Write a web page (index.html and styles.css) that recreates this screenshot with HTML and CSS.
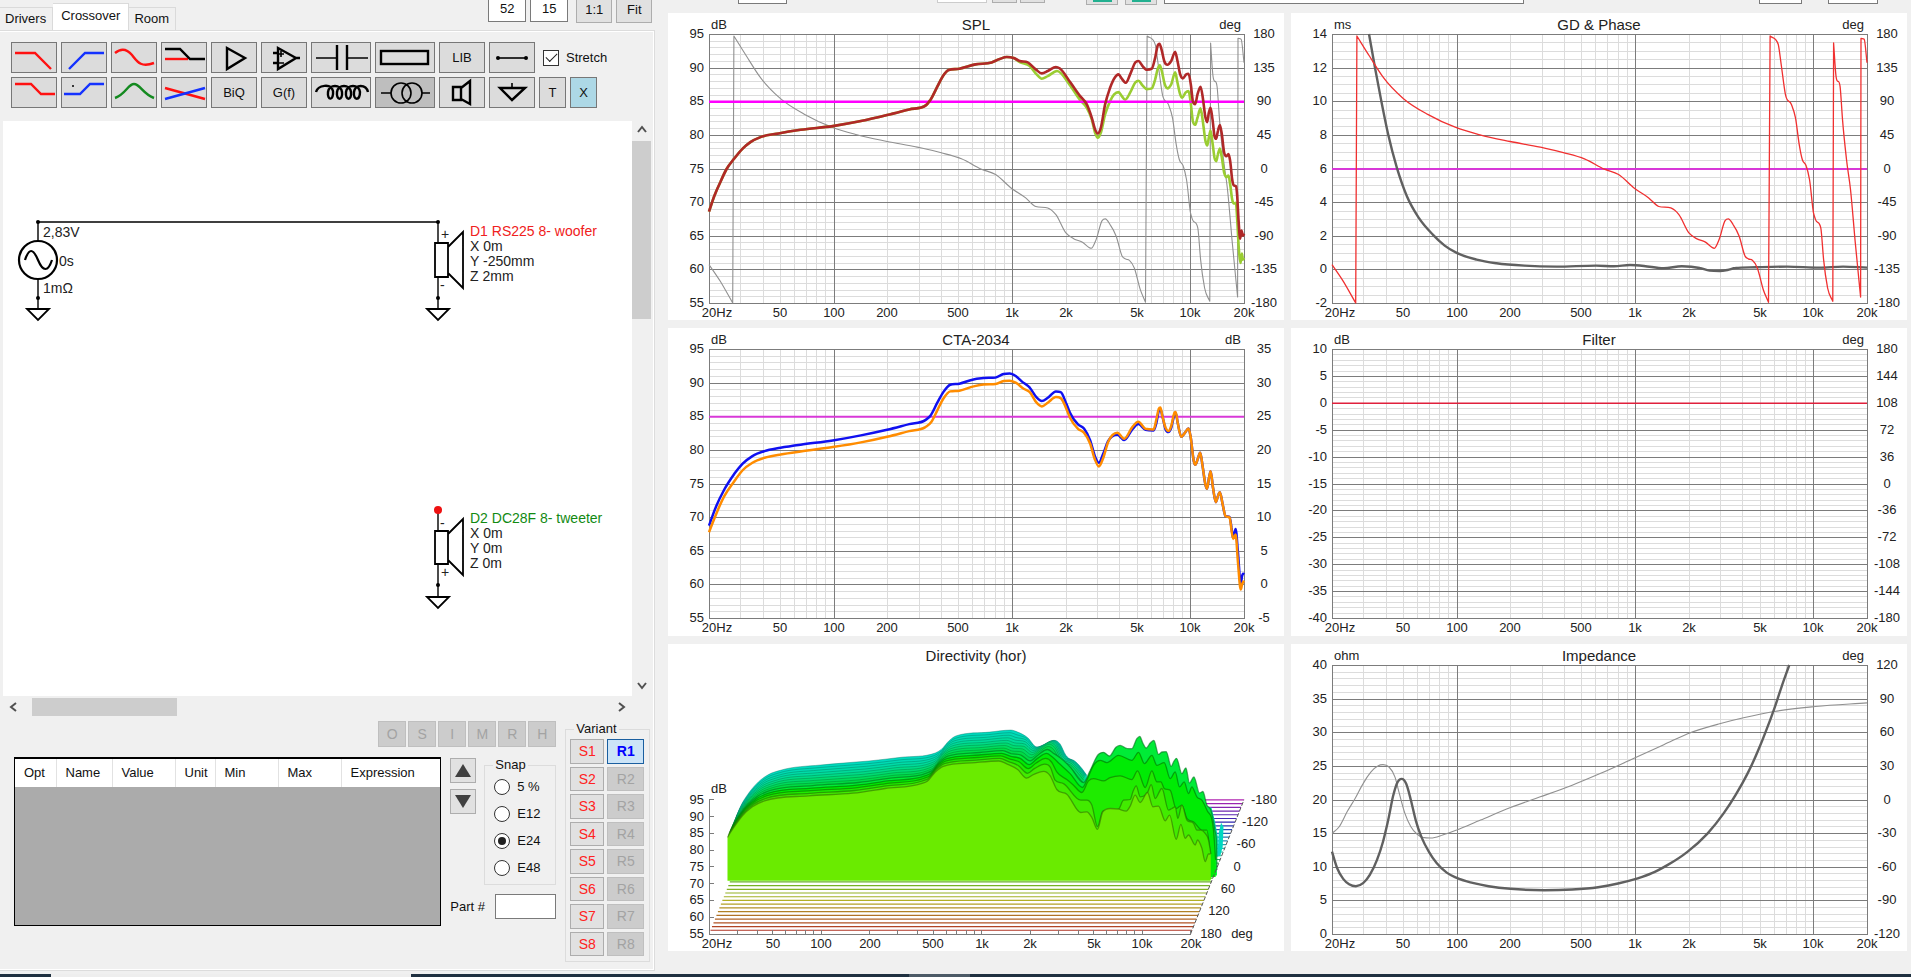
FILE: index.html
```html
<!DOCTYPE html>
<html lang="en">
<head>
<meta charset="utf-8">
<title>Crossover</title>
<link rel="stylesheet" href="styles.css">
</head>
<body>
<main class="workspace">
  <section class="editor">
    <header class="editor-head">
      <nav class="tabs">
        <button class="tab">Drivers</button>
        <button class="tab tab-active">Crossover</button>
        <button class="tab">Room</button>
      </nav>
      <div class="grid-size">
        <input class="size-box" type="text" value="52" aria-label="Columns">
        <input class="size-box" type="text" value="15" aria-label="Rows">
        <button class="size-button">1:1</button>
        <button class="size-button">Fit</button>
      </div>
    </header>

    <div class="tab-page">
      <div class="toolbar">
        <div class="tool-row">
          <button class="tool" aria-label="Low pass"><svg class="icon"><path class="red" d="M4 11H24L40 27"/></svg></button>
          <button class="tool" aria-label="High pass"><svg class="icon"><path class="blue" d="M8 27L24 11H43"/></svg></button>
          <button class="tool" aria-label="Notch"><svg class="icon"><path class="red" d="M4 11C10 6 16 7 21 13S29 26 43 21"/></svg></button>
          <button class="tool" aria-label="Shelf"><svg class="icon"><path class="red" d="M4 17H27"/><path class="ink" d="M4 7H19L29 17H44"/></svg></button>
          <button class="tool" aria-label="Buffer"><svg class="icon"><path class="ink" d="M16 6L34 16L16 27Z"/></svg></button>
          <button class="tool" aria-label="Op amp"><svg class="icon"><path class="ink" d="M17 6L35 16L17 27ZM12 11H17M12 21H17M35 16H39"/><path class="thin" d="M18 12H23M20 9V15M18 21H23"/></svg></button>
          <button class="tool tool-wide" aria-label="Capacitor"><svg class="icon icon-wide"><path class="thin" d="M5 16H26M36 16H57"/><path class="ink" d="M26 3V28M36 3V28"/></svg></button>
          <button class="tool tool-wide" aria-label="Resistor"><svg class="icon icon-wide"><rect class="ink" x="6" y="9" width="47" height="13"/></svg></button>
          <button class="tool">LIB</button>
          <button class="tool" aria-label="Wire"><svg class="icon"><path class="thin" d="M9 16H37"/><circle cx="9" cy="16" r="2"/><circle cx="37" cy="16" r="2"/></svg></button>
          <label class="stretch"><input class="tick" type="checkbox" checked>Stretch</label>
        </div>
        <div class="tool-row">
          <button class="tool" aria-label="Low shelf"><svg class="icon"><path class="red" d="M4 7H20L30 17H44"/></svg></button>
          <button class="tool" aria-label="High shelf"><svg class="icon"><path class="blue" d="M3 17H19L29 7H43"/><circle cx="12" cy="9" r="1"/></svg></button>
          <button class="tool" aria-label="Peak"><svg class="icon"><path class="green" d="M4 21C15 17 17 7 23 7S32 17 43 21"/></svg></button>
          <button class="tool" aria-label="Cross"><svg class="icon"><path class="red" d="M4 11L44 22"/><path class="blue" d="M4 22L44 11"/></svg></button>
          <button class="tool">BiQ</button>
          <button class="tool">G(f)</button>
          <button class="tool tool-wide" aria-label="Coil"><svg class="icon icon-wide"><path class="ink" d="M5 15C7 8 20 6 22 14C23 24 16 24 17 15C18 7 30 7 31 15C32 24 25 24 26 15C27 7 39 7 40 15C41 24 34 24 35 15C36 7 48 7 49 15C49 24 42 24 43 15C44 7 55 7 57 15"/></svg></button>
          <button class="tool tool-wide tool-down" aria-label="Transformer"><svg class="icon icon-wide"><path class="thin" d="M6 16H16M47 16H55"/><circle class="ring" cx="26" cy="16" r="10"/><circle class="ring" cx="37" cy="16" r="10"/></svg></button>
          <button class="tool" aria-label="Driver"><svg class="icon"><path class="ink" d="M14 10H22V23H14ZM22 11L31 4V27L22 22"/></svg></button>
          <button class="tool" aria-label="Ground"><svg class="icon"><path class="ink" d="M11 11H36L23 23Z"/><path class="thin" d="M23 6V11"/></svg></button>
          <button class="tool tool-small">T</button>
          <button class="tool tool-small tool-lit">X</button>
        </div>
      </div>

      <div class="sheet-frame">
        <div class="sheet">
          <svg class="schematic">
            <g transform="translate(-3 -121)">
              <path class="wire" d="M38 241V222H438V243M38 279V309M438 277V309M438 510V531M438 564V597"/>
              <circle class="source" cx="38" cy="260" r="19"/>
              <path class="source" d="M25 260C29 248 33 248 38 260S48 272 52 260"/>
              <path class="part" d="M435 243H448V277H435ZM448 247L463 232V288L448 273"/>
              <path class="part" d="M435 531H448V564H435ZM448 534L463 519V575L448 560"/>
              <path class="part" d="M27 309H49L38 320ZM427 309H449L438 320ZM427 597H449L438 608Z"/>
              <circle cx="38" cy="222" r="2"/><circle cx="38" cy="298" r="2"/>
              <circle cx="438" cy="222" r="2"/><circle cx="438" cy="298" r="2"/><circle cx="438" cy="585" r="2"/>
              <circle class="open-end" cx="438" cy="510" r="4"/>
              <text x="43" y="237">2,83V</text>
              <text x="59" y="266">0s</text>
              <text x="43" y="293">1mΩ</text>
              <text x="441" y="239">+</text><text x="440" y="290">-</text>
              <text x="440" y="528">-</text><text x="441" y="577">+</text>
              <text class="woofer" x="470" y="236">D1 RS225 8- woofer</text>
              <text x="470" y="251">X 0m</text><text x="470" y="266">Y -250mm</text><text x="470" y="281">Z 2mm</text>
              <text class="tweeter" x="470" y="523">D2 DC28F 8- tweeter</text>
              <text x="470" y="538">X 0m</text><text x="470" y="553">Y 0m</text><text x="470" y="568">Z 0m</text>
            </g>
          </svg>
        </div>
        <div class="scroll-v">
          <svg class="arrow"><path d="M6 11L10 6L14 11"/></svg>
          <div class="thumb-v"></div>
          <svg class="arrow"><path d="M6 7L10 12L14 7"/></svg>
        </div>
        <div class="scroll-h">
          <svg class="arrow"><path d="M13 6L8 10L13 14"/></svg>
          <div class="thumb-h"></div>
          <svg class="arrow"><path d="M7 6L12 10L7 14"/></svg>
        </div>
      </div>

      <div class="bottom">
        <div class="parts">
          <div class="modes">
            <button class="mode" disabled>O</button><button class="mode" disabled>S</button><button class="mode" disabled>I</button><button class="mode" disabled>M</button><button class="mode" disabled>R</button><button class="mode" disabled>H</button>
          </div>
          <div class="parts-body">
            <div class="param-box">
              <table class="params">
                <thead><tr><th class="c-opt">Opt</th><th class="c-name">Name</th><th class="c-value">Value</th><th class="c-unit">Unit</th><th class="c-value">Min</th><th class="c-value">Max</th><th>Expression</th></tr></thead>
              </table>
            </div>
            <div class="snap-column">
              <div class="snap-row">
                <div class="movers">
                  <button class="mover" aria-label="Up"><svg class="mover-icon"><path d="M0 13L8 0L16 13Z"/></svg></button>
                  <button class="mover" aria-label="Down"><svg class="mover-icon"><path d="M0 0H16L8 13Z"/></svg></button>
                </div>
                <fieldset class="group snap">
                  <legend>Snap</legend>
                  <label class="choice"><input class="dot" type="radio" name="snap">5 %</label>
                  <label class="choice"><input class="dot" type="radio" name="snap">E12</label>
                  <label class="choice"><input class="dot" type="radio" name="snap" checked>E24</label>
                  <label class="choice"><input class="dot" type="radio" name="snap">E48</label>
                </fieldset>
              </div>
              <label class="part-number">Part #<input class="part-input" type="text"></label>
            </div>
          </div>
        </div>
        <fieldset class="group variant">
          <legend>Variant</legend>
          <div class="variant-grid">
            <button class="save">S1</button><button class="recall recall-on">R1</button>
            <button class="save">S2</button><button class="recall" disabled>R2</button>
            <button class="save">S3</button><button class="recall" disabled>R3</button>
            <button class="save">S4</button><button class="recall" disabled>R4</button>
            <button class="save">S5</button><button class="recall" disabled>R5</button>
            <button class="save">S6</button><button class="recall" disabled>R6</button>
            <button class="save">S7</button><button class="recall" disabled>R7</button>
            <button class="save">S8</button><button class="recall" disabled>R8</button>
          </div>
        </fieldset>
      </div>
    </div>
  </section>

  <section class="results">
    <div class="strip">
      <span class="stub stub-a"></span><span class="stub stub-b"></span><span class="stub stub-c"></span><span class="stub stub-c stub-near"></span>
      <span class="stub stub-d"></span><span class="stub stub-d stub-next"></span><span class="stub stub-e"></span><span class="stub stub-f"></span><span class="stub stub-g"></span>
    </div>
    <div class="charts">
      <svg class="chart" id="spl"></svg>
      <svg class="chart" id="gd"></svg>
      <svg class="chart" id="cta"></svg>
      <svg class="chart" id="filter"></svg>
      <svg class="chart" id="directivity"></svg>
      <svg class="chart" id="impedance"></svg>
    </div>
  </section>
</main>
<footer class="taskbar"><span class="task-light"></span><span class="task-grey"></span></footer>
<script src="charts.js"></script>
</body>
</html>
```
FILE: styles.css
```css
* { box-sizing: border-box; }
body {
  margin: 0;
  height: 100vh;
  display: flex;
  flex-direction: column;
  background: #f0f0f0;
  color: #111;
  font: 13px/16px "Liberation Sans", Arial, sans-serif;
  overflow: hidden;
}
button, input { font: inherit; color: inherit; margin: 0; padding: 0; border-radius: 0; }
svg { display: block; }
.workspace { flex: 1; min-height: 0; display: grid; grid-template-columns: 34.5% 1fr; }

.editor { display: flex; flex-direction: column; min-width: 0; padding: 0 4px 3px 0; }
.editor-head { display: flex; justify-content: space-between; height: 30px; padding-right: 3px; }
.tabs { display: flex; align-items: flex-end; }
.tab { height: 23px; padding: 0 6px 0 5px; border: 1px solid #dadada; border-bottom: 0; border-left: 0; background: #f0f0f0; }
.tab-active { height: 27px; padding: 0 8px 3px; background: #fff; }
.grid-size { display: flex; align-items: flex-start; }
.size-box, .size-button { text-align: center; border: 1px solid #7a7a7a; border-top: 0; }
.size-box { width: 38px; height: 22px; margin-right: 4px; padding-bottom: 4px; background: #fff; }
.size-button { width: 36px; height: 23px; margin-left: 4px; padding-bottom: 3px; background: #e1e1e1; border-color: #adadad; }

.tab-page { flex: 1; min-height: 0; display: flex; flex-direction: column; border: 1px solid #dcdcdc; border-left: 0; box-shadow: inset -1px 1px #fff, inset 0 -1px #fff; }
.toolbar { display: flex; flex-direction: column; gap: 4px; padding: 11px 0 13px 11px; }
.tool-row { display: flex; gap: 4px; align-items: center; }
.tool { width: 46px; height: 31px; flex: none; border: 1px solid #777; background: #dcdcdc; overflow: hidden; }
.tool-wide { width: 60px; }
.tool-small { width: 27px; }
.tool-down { background: #bebebe; }
.tool-lit { background: #add8e6; }
.icon { width: 46px; height: 31px; margin: -1px; }
.icon-wide { width: 60px; }
.icon path, .icon rect { fill: none; stroke-width: 2.4; }
.icon .ink { stroke: #000; }
.icon .thin { stroke: #000; stroke-width: 1.6; }
.icon .red { stroke: #f11; }
.icon .blue { stroke: #1432ff; }
.icon .green { stroke: #148a20; }
.ring { fill: none; stroke: #000; stroke-width: 1.6; }
.stretch { display: flex; align-items: center; gap: 7px; margin-left: 4px; }
.tick { appearance: none; width: 16px; height: 16px; border: 1px solid #333; background: #fff; display: grid; place-items: center; }
.tick:checked::before { content: ""; width: 10px; height: 5px; border: solid #222; border-width: 0 0 1px 1px; transform: translateY(-2px) rotate(-45deg); }

.sheet-frame { flex: 1; min-height: 0; display: grid; grid-template: 1fr 21px / 1fr 20px; margin: 0 2px 0 3px; }
.sheet { background: #fff; min-height: 0; overflow: hidden; }
.schematic { width: 100%; height: 100%; font-size: 14px; }
.schematic text { fill: #222; }
.schematic .woofer { fill: #f02020; }
.schematic .tweeter { fill: #128a12; }
.wire { fill: none; stroke: #000; stroke-width: 1.4; }
.part { fill: none; stroke: #000; stroke-width: 1.8; }
.source { fill: none; stroke: #000; stroke-width: 2.2; }
.open-end { fill: #e11; }
.scroll-v { display: flex; flex-direction: column; }
.scroll-v .arrow:last-child { margin-top: auto; }
.thumb-v { width: 19px; height: 31%; background: #cdcdcd; }
.scroll-h { display: flex; align-items: center; }
.scroll-h .arrow:last-child { margin-left: auto; }
.thumb-h { width: 23%; height: 18px; margin-left: 9px; background: #cdcdcd; }
.arrow { width: 20px; height: 20px; }
.arrow path { fill: none; stroke: #505050; stroke-width: 2; }

.bottom { display: flex; gap: 9px; padding: 4px 4px 8px 14px; }
.parts { flex: 1; min-width: 0; display: flex; flex-direction: column; gap: 10px; }
.modes { display: flex; justify-content: flex-end; gap: 2px; }
.mode { width: 28px; height: 26px; border: 1px solid #bfbfbf; background: #ccc; color: #a3a3a3; }
.parts-body { display: flex; gap: 9px; }
.param-box { flex: 1; min-width: 0; height: 169px; border: 1px solid #000; border-top-width: 2px; background: #ababab; }
.params { width: 100%; border-collapse: collapse; table-layout: fixed; background: #fff; }
.params th { height: 28px; padding: 0 0 0 9px; text-align: left; font-weight: normal; border-right: 1px solid #e2e2e2; }
.params th:last-child { border-right: 0; }
.params .c-opt { width: 41px; }
.params .c-name { width: 56px; }
.params .c-value { width: 63px; }
.params .c-unit { width: 40px; }
.snap-column { width: 106px; display: flex; flex-direction: column; gap: 9px; }
.snap-row { display: flex; gap: 8px; }
.movers { display: flex; flex-direction: column; gap: 6px; padding-top: 1px; }
.mover { width: 26px; height: 25px; border: 1px solid #adadad; background: #e1e1e1; display: grid; place-items: center; }
.mover-icon { width: 16px; height: 13px; fill: #404040; }
.group { margin: 0; border: 1px solid #dcdcdc; min-width: 0; }
.group legend { padding: 0 2px; margin: 0; }
.snap { flex: 1; padding: 6px 0 8px 9px; display: flex; flex-direction: column; gap: 11px; }
.snap legend { margin-left: -1px; }
.choice { display: flex; align-items: center; gap: 7px; }
.dot { appearance: none; width: 16px; height: 16px; border: 1px solid #333; border-radius: 50%; background: #fff; display: grid; place-items: center; }
.dot:checked::before { content: ""; width: 8px; height: 8px; border-radius: 50%; background: #222; }
.part-number { display: flex; justify-content: space-between; align-items: center; }
.part-input { width: 61px; height: 25px; border: 1px solid #7a7a7a; background: #fff; }
.variant { width: 85px; padding: 2px 5px 5px 4px; }
.variant legend { margin-left: 4px; }
.variant-grid { display: grid; grid-template-columns: 34px 37px; grid-auto-rows: 1fr; gap: 3px; height: 217px; }
.save, .recall { border: 1px solid #adadad; background: #e1e1e1; }
.save { color: #f22; }
.recall { background: #ccc; border-color: #bfbfbf; color: #a3a3a3; }
.recall-on { background: #cce4f7; border-color: #1a5fa0; color: #00f; font-weight: bold; }
.save, .recall, .mode { font-size: 14px; }

.results { display: flex; flex-direction: column; min-width: 0; padding: 0 4px 23px 9px; }
.strip { height: 13px; display: flex; align-items: flex-start; }
.stub { flex: none; border: 1px solid #7a7a7a; border-top: 0; background: #fff; height: 4px; }
.stub-a { width: 49px; margin-left: 70px; }
.stub-b { width: 50px; height: 3px; margin-left: 150px; border-color: #ccc; }
.stub-c { width: 25px; height: 3px; margin-left: 5px; background: #e1e1e1; border-color: #adadad; }
.stub-near { margin-left: 3px; }
.stub-d { width: 32px; height: 5px; margin-left: 41px; border-color: #adadad; background: linear-gradient(#22b090, #22b090) center top / 19px 2px no-repeat #e1e1e1; }
.stub-next { margin-left: 7px; }
.stub-e { flex: 1; margin-left: 7px; }
.stub-f { width: 43px; margin-left: 235px; }
.stub-g { width: 50px; margin: 0 29px 0 26px; }
.charts { flex: 1; min-height: 0; display: grid; grid-template-columns: 1fr 1fr; grid-template-rows: repeat(3, minmax(0, 1fr)); gap: 8px 7px; }
.chart { width: 100%; height: 100%; background: #fff; fill: #222; }
.chart .title { font-size: 15px; text-anchor: middle; }
.chart .mid { text-anchor: middle; }
.chart .end { text-anchor: end; }
.minor, .major { shape-rendering: crispEdges; fill: none; stroke: #dcdcdc; }
.major { stroke: #7c7c7c; }
.curve { fill: none; stroke-linejoin: round; }

.taskbar { height: 3px; display: flex; background: #1f3040; }
.task-light { width: 360px; margin-left: 51px; background: #eee; }
.task-grey { width: 61px; margin-left: 498px; background: #4c5a66; }
```
FILE: charts.js
```js
const FREQ = [['20Hz', 20], ['50', 50], ['100', 100], ['200', 200], ['500', 500], ['1k', 1000], ['2k', 2000], ['5k', 5000], ['10k', 10000], ['20k', 20000]];
const logPos = f => Math.log10(f / 20) / 3;
const shift = (pts, ax, bx, by) => pts.map(([x, y]) => [ax + bx * x, by + y]);

/* Each curve is a list of [x, y] samples in the coordinate box of its chart. */
const redTop = shift([[0,118],[30,158],[60,200],[80,225],[95,265],[105,300],[113,312],[122,295],[135,225],[150,175],[162,148],[175,135],[185,148],[197,160],[210,135],[225,100],[235,95],[247,110],[260,121],[275,118],[285,85],[293,48],[298,43],[304,60],[312,95],[322,106],[333,95],[345,67],[352,95],[360,135],[368,147],[378,135],[385,133],[392,165],[398,215],[405,224],[412,195],[421,172],[428,205],[436,265],[441,278],[446,250],[451,235],[457,270],[463,320],[468,328],[473,305],[479,287],[485,315],[492,370],[498,380],[505,374],[510,395],[516,450],[521,468],[527,470],[531,500],[535,570],[540,627],[544,603],[548,618],[552,612]], 995.5, .8297, 90);
const greenTop = shift([[0,122],[30,168],[60,212],[80,235],[95,270],[105,310],[113,325],[122,310],[135,255],[150,215],[162,195],[175,188],[185,200],[195,211],[210,190],[225,160],[235,154],[247,168],[260,179],[275,177],[285,150],[293,118],[299,108],[306,130],[314,165],[322,177],[333,165],[345,129],[352,160],[360,195],[366,205],[376,190],[385,185],[391,215],[398,275],[405,286],[412,265],[421,237],[428,275],[436,335],[441,348],[446,325],[451,303],[457,340],[463,385],[468,395],[473,375],[479,357],[485,385],[492,430],[498,443],[505,438],[510,465],[516,510],[521,522],[527,520],[531,570],[536,660],[541,700],[545,672],[548,690],[552,685]], 995.5, .8297, 90);
const splLow = [[122,636],[135,590],[150,548],[165,510],[185,477],[205,448],[225,428],[250,413],[295,402],[350,391],[430,380],[500,365],[565,347],[620,330],[662,317],[672,303],[690,262],[705,228],[718,212],[745,208],[785,195],[825,189],[845,179],[863,173],[880,176]];
const splRed = [...splLow,[895,185],[915,189],[935,210],[950,222],[965,215],[985,203],...redTop];
const splGreen = [...splLow,[895,188],[920,200],[937,225],[950,238],[965,230],[988,215],...greenTop.slice(1)];
const phase = [
  [[122,795],[150,845],[181,910]],
  [[184,110],[215,170],[250,235],[300,298],[360,345],[430,384],[490,406],[565,426],[640,443],[700,460],[750,478],[800,509],[835,525],[875,567],[910,595],[935,621],[965,625],[985,645],[1010,700],[1030,718],[1050,727],[1073,746],[1085,720],[1100,663],[1108,658],[1120,675],[1135,710],[1150,770],[1158,778],[1168,782],[1180,805],[1195,870],[1208,908]],
  [[1212,110],[1232,135],[1240,200],[1250,285],[1265,315],[1275,355],[1285,440],[1292,480],[1302,500],[1310,540],[1320,640],[1325,660],[1338,685],[1345,780],[1355,865],[1368,905]],
  [[1370,131],[1376,230],[1386,262],[1392,360],[1402,480],[1412,570],[1424,730],[1437,892]],
  [[1438,117],[1446,120],[1453,190]]];
const phaseGd = phase.map(s => s.map(([x, y]) => [117 + (x - 122) * 1343 / 1331, y]));
const delay = [[210,104],[225,205],[240,300],[258,405],[280,505],[305,590],[335,655],[370,705],[400,738],[430,760],[480,780],[530,791],[600,798],[680,801],[780,798],[825,800],[865,796],[900,799],[950,806],[995,800],[1040,805],[1065,813],[1090,814],[1110,811],[1130,805],[1180,803],[1260,801],[1340,804],[1400,801],[1460,804]];
const tail = [[1288,310],[1297,352],[1305,342],[1315,327],[1320,350],[1328,425],[1332,436],[1338,418],[1344,400],[1350,440],[1357,495],[1361,508],[1366,475],[1370,455],[1376,505],[1383,548],[1388,530],[1393,518],[1400,555],[1407,590]];
const ctaBlue = [[122,618],[140,560],[160,510],[185,463],[205,433],[230,410],[260,395],[300,385],[350,376],[430,363],[500,348],[565,331],[620,314],[660,302],[672,290],[690,250],[705,218],[722,196],[745,193],[780,180],[805,176],[835,174],[855,164],[870,162],[885,170],[900,186],[920,205],[937,234],[950,245],[965,235],[985,216],[997,218],[1010,250],[1020,280],[1040,315],[1055,327],[1070,362],[1082,410],[1092,430],[1102,405],[1115,365],[1138,346],[1155,362],[1175,330],[1190,314],[1208,331],[1228,333],[1235,310],[1241,275],[1245,270],[1250,290],[1258,330],[1265,338],[1272,325],[1280,285],[1283,280],...tail,[1417,592],[1422,625],[1426,655],[1432,628],[1438,700],[1445,795],[1448,770],[1453,760]];
const ctaOrange = [[122,638],[140,583],[160,530],[185,485],[205,453],[230,430],[260,415],[300,405],[350,396],[430,383],[500,369],[565,352],[620,335],[660,323],[675,308],[690,273],[705,238],[722,216],[745,214],[780,201],[805,195],[835,194],[855,185],[870,184],[885,190],[905,208],[920,218],[937,250],[950,261],[965,250],[985,233],[997,236],[1010,265],[1020,295],[1040,328],[1055,340],[1070,372],[1082,420],[1092,441],[1102,418],[1115,368],[1138,340],[1155,358],[1175,323],[1190,307],[1208,328],[1228,330],[1235,300],[1241,268],[1245,264],[1250,290],[1258,325],[1265,335],[1272,320],[1280,280],[1283,278],...tail,[1417,594],[1426,658],[1432,645],[1438,730],[1445,810],[1448,795],[1453,783]];
const impedance = [[117,635],[130,685],[145,717],[160,733],[177,739],[195,730],[212,705],[230,660],[245,605],[258,540],[270,470],[280,430],[292,416],[303,430],[315,480],[327,540],[342,592],[360,635],[380,670],[405,698],[430,714],[470,729],[510,739],[565,747],[650,751],[720,749],[785,742],[835,731],[880,717],[920,700],[960,675],[1010,635],[1060,580],[1100,520],[1130,465],[1160,400],[1187,330],[1207,270],[1227,205],[1245,140],[1265,73]];
const impPhase = [[117,580],[135,560],[155,515],[175,475],[195,430],[215,395],[232,377],[245,373],[260,380],[275,410],[285,455],[300,520],[315,560],[330,582],[345,592],[365,594],[395,585],[430,570],[490,540],[565,502],[640,470],[720,435],[790,400],[875,354],[950,313],[1010,280],[1090,250],[1150,232],[1227,213],[1330,198],[1460,187]];

/* Cubic through the samples; slopes are limited so that peaks are not overshot. */
function smooth(p) {
  const n = p.length, d = [], m = [];
  for (let i = 0; i < n - 1; i++) d[i] = (p[i + 1][1] - p[i][1]) / (p[i + 1][0] - p[i][0]);
  for (let i = 0; i < n; i++) {
    if (i === 0) m[i] = d[0];
    else if (i === n - 1) m[i] = d[n - 2];
    else if (d[i - 1] * d[i] <= 0) m[i] = 0;
    else {
      const a = p[i][0] - p[i - 1][0], b = p[i + 1][0] - p[i][0];
      const mean = (d[i - 1] * b + d[i] * a) / (a + b);
      m[i] = Math.sign(mean) * Math.min(Math.abs(mean), 3 * Math.abs(d[i - 1]), 3 * Math.abs(d[i]));
    }
  }
  let s = p[0].map(v => v.toFixed(1)).join(' ');
  for (let i = 0; i < n - 1; i++) {
    const h = (p[i + 1][0] - p[i][0]) / 3;
    s += 'C' + [p[i][0] + h, p[i][1] + m[i] * h, p[i + 1][0] - h, p[i + 1][1] - m[i + 1] * h, p[i + 1][0], p[i + 1][1]].map(v => v.toFixed(1)).join(' ');
  }
  return s;
}

const text = (x, y, s, c = 'mid') => `<text x="${Math.round(x)}" y="${Math.round(y)}" class="${c}">${s}</text>`;

function frame(el, box) {
  const w = el.clientWidth, h = el.clientHeight;
  const L = 41, R = w - 40, T = 21, B = h - 17;
  const X = x => L + (x - box[0]) / (box[2] - box[0]) * (R - L);
  const Y = y => T + (y - box[1]) / (box[3] - box[1]) * (B - T);
  return { w, h, L, R, T, B, X, Y, map: pts => pts.map(([x, y]) => [X(x), Y(y)]) };
}

function drawChart(id, o) {
  const el = document.getElementById(id);
  const { w, L, R, T, B, map } = frame(el, o.box);
  let minor = '', major = '', labels = '';
  for (const decade of [10, 100, 1000, 10000])
    for (let k = 1; k < 10; k++) {
      const f = decade * k;
      if (f < 30 || f > 19000) continue;
      const seg = `M${Math.round(L + logPos(f) * (R - L)) + .5} ${T}V${B}`;
      if (k === 1) major += seg; else minor += seg;
    }
  const n = o.left.length - 1, total = n * o.sub;
  for (let i = 0; i <= total; i++) {
    const seg = `M${L} ${Math.round(T + i / total * (B - T)) + .5}H${R}`;
    if (i % o.sub) minor += seg; else major += seg;
  }
  major += `M${L + .5} ${T}V${B}M${R + .5} ${T}V${B + 1}`;
  o.left.forEach((t, i) => labels += text(L - 5, T + i / n * (B - T) + 4, t, 'end'));
  o.right.forEach((t, i) => labels += text(R + 20, T + i / (o.right.length - 1) * (B - T) + 4, t));
  FREQ.forEach(([t, f], i) => labels += text(L + logPos(f) * (R - L) + (i ? 0 : 8), B + 14, t));
  labels += text(L + 2, T - 5, o.units[0], 'start') + text(R - 3, T - 5, o.units[1], 'end') + text(w / 2, T - 4, o.title, 'title');
  let curves = '';
  for (const c of o.curves) {
    const d = c.level !== undefined
      ? `M${L} ${T + c.level * (B - T) + .5}H${R}`
      : 'M' + (c.parts || [c.pts]).map(s => smooth(map(s))).join('L');
    curves += `<path class="curve" stroke="${c.color}" stroke-width="${c.width}" d="${d}"/>`;
  }
  el.innerHTML = `<path class="minor" d="${minor}"/><path class="major" d="${major}"/>${curves}${labels}`;
}

/* Waterfall: back and front outlines of the low band, and the high-band outlines of the five front layers. */
const rearEdge = [[190,530],[200,500],[220,460],[245,425],[270,403],[300,390],[400,374],[520,362],[600,351],[685,338],[700,327],[720,300],[738,286],[820,275],[873,269],[890,275],[915,292],[938,320],[960,312],[982,300],[995,310],[1010,345],[1035,365],[1050,385],[1062,405]];
const frontEdge = [[168,592],[175,578],[185,560],[205,527],[230,500],[260,482],[370,467],[480,459],[560,445],[650,430],[665,423],[685,395],[705,378],[785,367],[843,362],[865,372],[890,388],[912,414],[930,402],[955,393],[970,405],[985,440],[1015,465],[1030,492],[1045,515]];
const highBands = [
  [[60,82],[90,110],[130,157],[150,120],[175,72],[190,66],[208,77],[228,50],[240,45],[260,54],[275,55],[290,25],[299,18],[308,38],[318,53],[330,38],[341,30],[355,72],[365,65],[378,64],[393,108],[400,95],[409,84],[425,130],[437,113],[448,158],[461,140],[478,188],[488,184],[500,225],[512,240],[524,300],[529,340],[530,420]],
  [[60,102],[90,130],[127,172],[140,150],[160,105],[180,90],[200,97],[235,75],[275,90],[295,66],[313,100],[335,75],[350,105],[372,97],[390,145],[405,125],[418,170],[432,155],[445,190],[455,170],[470,200],[485,210],[500,240],[520,300],[526,390]],
  [[50,125],[80,148],[100,165],[125,187],[145,152],[160,145],[190,152],[210,142],[240,137],[275,148],[292,122],[315,172],[335,122],[350,155],[362,155],[372,175],[390,180],[408,235],[425,225],[440,265],[460,275],[485,300],[500,300],[510,370]],
  [[45,150],[70,160],[122,210],[140,210],[155,225],[172,290],[188,243],[235,237],[250,210],[270,208],[278,185],[288,167],[300,200],[322,187],[333,163],[345,205],[365,175],[385,240],[395,235],[405,230],[413,265],[425,225],[440,270],[460,280],[470,300],[482,300],[495,310],[505,330],[512,372]],
  [[50,178],[80,192],[122,247],[140,245],[155,262],[172,298],[188,245],[210,235],[235,237],[258,243],[270,228],[285,195],[300,217],[322,187],[338,230],[355,228],[375,272],[388,255],[408,328],[422,283],[435,325],[445,315],[465,345],[472,330],[485,355],[495,395],[505,372],[511,372]]
].map(b => shift(b, 945.8, .8297, 270));
const hues = [172,169,166,162,157,151,145,139,134,121,112,103,93];

function drawDirectivity() {
  const el = document.getElementById('directivity');
  const { w, T, X, Y, map } = frame(el, [122, 73, 1453, 883]);
  let s = '';
  for (let k = 1; k <= 36; k++) {
    const y = Y(883 - k * 11.22), hue = k <= 14 ? 6.6 * k : 93 + (k - 14) * 9.4;
    s += `<path stroke="hsl(${hue} 65% 42%)" stroke-width="1.2" d="M${X(122 + k * 3.69)} ${y}H${X(1320 + k * 3.69)}"/>`;
  }
  const plain = (pts, fill) => `<path fill="${fill}" d="M${map(pts).map(p => p.join(' ')).join('L')}Z"/>`;
  s += plain([[1360,500],[1372,502],[1380,540],[1388,590],[1388,650],[1365,650]], '#00d8a8');
  s += plain([[1390,580],[1396,548],[1402,560],[1400,620],[1394,648],[1387,650]], '#00d8c0');
  for (let i = 0; i <= 12; i++) {
    const t = i / 12, band = highBands[i - 8];
    let pts = rearEdge.map(([x, y], j) => {
      const u = Math.pow(t, 1 + 2 * Math.min(1, Math.max(0, (j - 15) / 4)));
      return [x + (frontEdge[j][0] - x) * t, y + (frontEdge[j][1] - y) * u];
    });
    if (band) pts = [...pts.filter(p => p[0] < band[0][0] - 8), ...band];
    const m = map(pts), floor = Y(723 - 4 * (12 - i)), line = smooth(m);
    s += `<path fill="hsl(${hues[i]} 100% ${i < 8 ? 43 : 46}%)" d="M${m[0][0]} ${floor}L${line}V${floor}Z"/>`;
    s += `<path class="curve" stroke="hsl(${hues[i]} 100% 22%)" stroke-opacity="${i < 8 ? .4 : .6}" stroke-width="${i < 8 ? 1 : 1.3}" d="M${line}"/>`;
  }
  s += `<path class="major" d="M${X(122)} ${Y(479)}V${Y(883)}H${X(1320)}"/>`;
  s += `<path class="curve" stroke="#555" stroke-dasharray="4 2" d="M${X(1320)} ${Y(883)}L${X(1453)} ${Y(479)}"/>`;
  for (let i = 0; i <= 8; i++) {
    const y = 479 + i * 50.5;
    s += `<path class="major" d="M${X(122)} ${Y(y)}h5"/>` + text(X(122) - 5, Y(y) + 4, 95 - i * 5, 'end');
  }
  for (const d of [10, 100, 1000, 10000])
    for (let k = 1; k < 10; k++)
      if (d * k > 20 && d * k <= 20000) s += `<path class="major" d="M${X(122 + logPos(d * k) * 1198)} ${Y(883)}v-4"/>`;
  FREQ.forEach(([t, f], i) => s += text(X(122 + logPos(f) * 1198) + (i ? 0 : 8), Y(883) + 14, t));
  [-180, -120, -60, 0, 60, 120, 180].forEach((v, i) => s += text(X(1502 - i * 22), Y(478 + i * 67.3) + 4, v));
  s += text(X(1449), Y(883) + 4, 'deg') + text(X(122) + 2, Y(447) + 4, 'dB', 'start') + text(w / 2, T - 4, 'Directivity (hor)', 'title');
  el.innerHTML = s;
}

const steps = (from, by, n) => Array.from({ length: n }, (_, i) => from + by * i);

function drawAll() {
  drawChart('spl', { title: 'SPL', units: ['dB', 'deg'], box: [122,104,1453,910], left: steps(95, -5, 9), right: steps(180, -45, 9), sub: 5,
    curves: [{ parts: phase, color: '#909090', width: 1.1 }, { pts: splGreen, color: '#9acd32', width: 2.6 }, { level: .25, color: '#f0f', width: 2.4 }, { pts: splRed, color: '#b02828', width: 2.6 }] });
  drawChart('gd', { title: 'GD &amp; Phase', units: ['ms', 'deg'], box: [117,104,1460,910], left: steps(14, -2, 9), right: steps(180, -45, 9), sub: 4,
    curves: [{ level: .5, color: '#d838d8', width: 2 }, { pts: delay, color: '#606060', width: 2.4 }, { parts: phaseGd, color: '#f03030', width: 1.3 }] });
  drawChart('cta', { title: 'CTA-2034', units: ['dB', 'dB'], box: [122,89,1453,895], left: steps(95, -5, 9), right: steps(35, -5, 9), sub: 5,
    curves: [{ level: .25, color: '#d838d8', width: 2 }, { pts: ctaBlue, color: '#1010f0', width: 2.5 }, { pts: ctaOrange, color: '#ff8c00', width: 2.5 }] });
  drawChart('filter', { title: 'Filter', units: ['dB', 'deg'], box: [117,89,1460,895], left: steps(10, -5, 11), right: steps(180, -36, 11), sub: 5,
    curves: [{ level: .2, color: '#e0203c', width: 1.4 }] });
  drawChart('impedance', { title: 'Impedance', units: ['ohm', 'deg'], box: [117,73,1460,883], left: steps(40, -5, 9), right: steps(120, -30, 9), sub: 5,
    curves: [{ pts: impPhase, color: '#909090', width: 1.1 }, { pts: impedance, color: '#606060', width: 2.4 }] });
  drawDirectivity();
}

drawAll();
window.addEventListener('resize', drawAll);
```
